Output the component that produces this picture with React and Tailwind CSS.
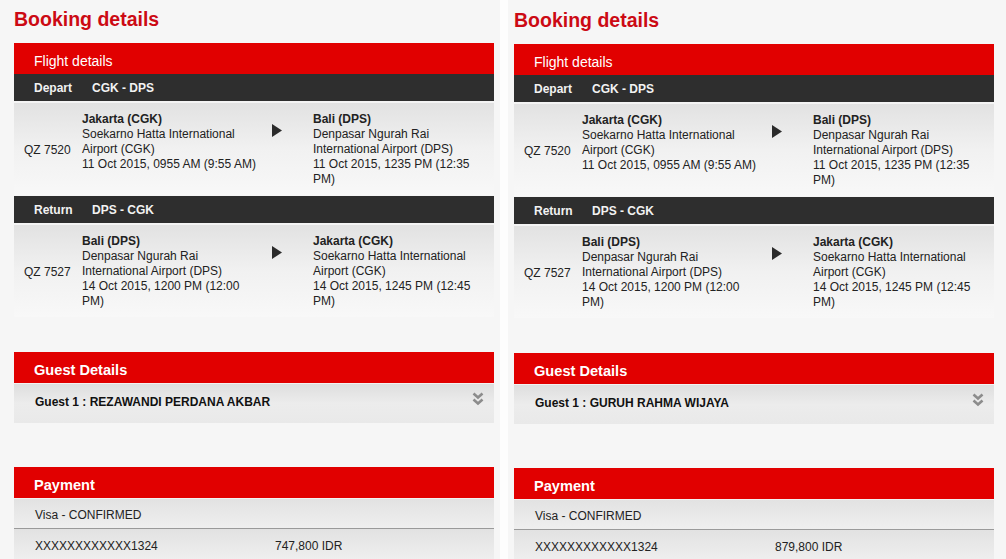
import React from "react";

const font = { fontFamily: '"Liberation Sans", Arial, sans-serif' };

function Arrow() {
  return (
    <svg width="10" height="13" viewBox="0 0 10 13">
      <polygon points="0,0 10,6.5 0,13" fill="#2b2b2b" />
    </svg>
  );
}

function Chevrons() {
  return (
    <svg width="12" height="14" viewBox="0 0 12 14">
      <polyline points="1.5,1.5 6,5.5 10.5,1.5" fill="none" stroke="#8c8c8c" strokeWidth="2.6" />
      <polyline points="1.5,7.5 6,11.5 10.5,7.5" fill="none" stroke="#8c8c8c" strokeWidth="2.6" />
    </svg>
  );
}

function RedBar({ children, bold }) {
  return (
    <div
      className={`h-[31px] bg-[#e10000] pl-[20px] pt-[10px] text-white leading-[16px] ${
        bold ? "font-bold text-[14.6px]" : "text-[14px]"
      }`}
    >
      {children}
    </div>
  );
}

function DarkBar({ label, route }) {
  return (
    <div className="h-[27px] bg-[#2e2e2e] flex items-center pl-[20px] text-[12px] font-bold text-[#f2f2f2]">
      <span className="w-[58px]">{label}</span>
      <span>{route}</span>
    </div>
  );
}

function FlightRow({ code, from, to }) {
  return (
    <div className="border-t-2 border-[#f4f4f4] bg-linear-to-b from-[#e2e2e2] via-[#f1f1f1] to-[#f8f8f8] flex items-center pt-[9px] pb-[8px] text-[12px] leading-[15px] text-[#222]">
      <div className="w-[68px] pl-[10px] shrink-0 pt-[2px]">{code}</div>
      <div className="w-[179px] shrink-0 self-start">
        <div className="font-bold">{from[0]}</div>
        <div>{from[1]}</div>
        <div>{from[2]}</div>
      </div>
      <div className="w-[52px] shrink-0 self-start pl-[11px] pt-[12px]">
        <Arrow />
      </div>
      <div className="w-[179px] shrink-0 self-start">
        <div className="font-bold">{to[0]}</div>
        <div>{to[1]}</div>
        <div>{to[2]}</div>
      </div>
    </div>
  );
}

function Panel({ guest, amount, offset }) {
  return (
    <div className={`w-[480px] shrink-0 ${offset ? "pt-[1px]" : ""}`}>
      <div className="pt-[8px] mb-[8px] h-[35px]">
        <h1 className="text-[19.5px] leading-[23px] font-bold text-[#cc0a14]">Booking details</h1>
      </div>
      <RedBar>Flight details</RedBar>
      <DarkBar label="Depart" route="CGK - DPS" />
      <FlightRow
        code="QZ 7520"
        from={["Jakarta (CGK)", "Soekarno Hatta International Airport (CGK)", "11 Oct 2015, 0955 AM (9:55 AM)"]}
        to={["Bali (DPS)", "Denpasar Ngurah Rai International Airport (DPS)", "11 Oct 2015, 1235 PM (12:35 PM)"]}
      />
      <div className="h-px" />
      <DarkBar label="Return" route="DPS - CGK" />
      <FlightRow
        code="QZ 7527"
        from={["Bali (DPS)", "Denpasar Ngurah Rai International Airport (DPS)", "14 Oct 2015, 1200 PM (12:00 PM)"]}
        to={["Jakarta (CGK)", "Soekarno Hatta International Airport (CGK)", "14 Oct 2015, 1245 PM (12:45 PM)"]}
      />
      <div className="h-[35px]" />
      <RedBar bold>Guest Details</RedBar>
      <div className="border-t border-[#f2f2f2] h-[40px] bg-linear-to-b from-[#dedede] via-[#ececec] to-[#e9e9e9] flex items-start pt-[9px] pl-[21px] pr-[10px] text-[12px] leading-[15px] font-bold text-[#111]">
        <span className="flex-1 pt-[2px]">Guest 1 : {guest}</span>
        <span className="-mt-[1px]">
          <Chevrons />
        </span>
      </div>
      <div className="h-[44px]" />
      <RedBar bold>Payment</RedBar>
      <div className="border-t border-[#f2f2f2] h-[30px] bg-linear-to-b from-[#e2e2e2] to-[#efefef] pt-[9px] pl-[21px] text-[12px] leading-[15px] text-[#222]">
        Visa - CONFIRMED
      </div>
      <div className="h-px bg-[#9a9a9a]" />
      <div className="h-[31px] bg-linear-to-b from-[#e2e2e2] to-[#efefef] flex items-start pt-[10px] pl-[21px] text-[12px] leading-[15px] text-[#222]">
        <span className="w-[240px]">XXXXXXXXXXXX1324</span>
        <span>{amount}</span>
      </div>
    </div>
  );
}

export default function App() {
  return (
    <div style={font} className="w-[1006px] h-[559px] overflow-hidden bg-[#f6f6f6] flex">
      <div className="w-[500px] shrink-0 pl-[14px]">
        <Panel guest="REZAWANDI PERDANA AKBAR" amount="747,800 IDR" />
      </div>
      <div className="w-[8px] shrink-0 bg-[#fdfdfd]" />
      <div className="shrink-0 pl-[6px]">
        <Panel guest="GURUH RAHMA WIJAYA" amount="879,800 IDR" offset />
      </div>
    </div>
  );
}
